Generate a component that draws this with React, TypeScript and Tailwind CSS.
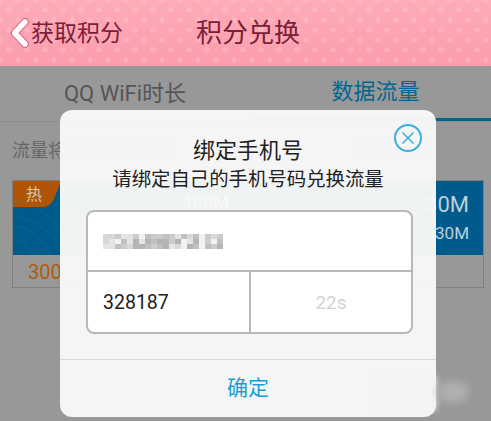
const font = "font-['Roboto','Noto_Sans_CJK_SC',sans-serif]";

// mosaic covering the phone number in the reference
const shade: Record<string, string> = {
  a: "bg-[#b4b4b4]",
  b: "bg-[#c0c0c0]",
  c: "bg-[#cccccc]",
  d: "bg-[#d8d8d8]",
  e: "bg-[#e4e4e4]",
  f: "bg-[#f2f2f2]",
};
const mosaic = ["ddceecfbccbcebdbfcdc", "defbeaeabaacafeafcfb", "eebcdaabcbaedfabfbca"];

export default function App() {
  return (
    <div className={`relative h-[421px] w-[491px] overflow-hidden bg-[#989898] ${font}`}>
      {/* header */}
      <header className="flex h-[66px] items-center bg-[radial-gradient(circle,rgba(255,255,255,0.16)_2.5px,transparent_3px),radial-gradient(circle,rgba(255,255,255,0.16)_2.5px,transparent_3px),linear-gradient(#ffabb8,#fb9dab)] bg-[length:18px_20px,18px_20px,100%_100%] bg-[position:0_0,9px_10px,0_0] pl-[10px]">
        <svg width="19" height="30" viewBox="0 0 19 30" className="shrink-0">
          <path d="M15 4 L4.5 15 L15 26" fill="none" stroke="#d9587c" strokeWidth="7.5" strokeLinecap="round" strokeLinejoin="round" />
          <path d="M15 4 L4.5 15 L15 26" fill="none" stroke="#ffffff" strokeWidth="5.5" strokeLinecap="round" strokeLinejoin="round" />
        </svg>
        <span className="ml-[2px] w-[165px] text-[23px] leading-none text-[#7a2038]">获取积分</span>
        <span className="text-[26px] leading-none text-[#7a2038]">积分兑换</span>
      </header>

      {/* tabs */}
      <div className="flex h-[56px] border-b border-[#8c8c8c]">
        <div className="flex w-[250px] items-center justify-center text-[22px] leading-none text-[#555555]">QQ WiFi时长</div>
        <div className="flex w-[241px] items-center justify-center border-b-[3px] border-[#00648f] pl-[10px] text-[22px] leading-none text-[#00688f]">数据流量</div>
      </div>

      {/* page behind the dialog */}
      <div className="px-[12px] pt-[16px]">
        <div className="flex h-[26px] items-center justify-between pr-[50px] text-[18px] leading-none text-[#666666]">
          <span>流量将兑换至手机号</span>
          <span>更改号码</span>
        </div>
        <div className="mt-[16px] h-[108px] w-[472px] border border-[#808080]">
          <div className="relative flex h-[74px] items-center justify-end overflow-hidden bg-[#005a8c] pr-[14px]">
            <svg width="48" height="74" viewBox="0 0 48 74" className="absolute left-0 top-0">
              <path d="M0 34 C16 36 30 46 48 62 M0 44 C14 46 26 54 38 74 M0 56 C8 58 14 64 20 74 M24 27 C34 34 42 42 48 50" fill="none" stroke="#06608f" strokeWidth="2" />
              <path d="M0 0 H48 L41 18 Q37 26 30 26 H0 Z" fill="#b05406" />
            </svg>
            <div className="absolute left-[13px] top-[6px] text-[16px] leading-none text-[#d8c8b8]">热</div>
            <div className="absolute left-[170px] top-[13px] text-[18px] leading-none text-white">100M</div>
            <div className="flex flex-col items-end gap-[9px] leading-none text-[#bcd0dc]">
              <span className="text-[22px]">30M</span>
              <span className="text-[17px]">30M</span>
            </div>
          </div>
          <div className="flex h-[33px] items-center pl-[15px] text-[20px] leading-none text-[#b05a10]">300</div>
        </div>
      </div>

      {/* dialog */}
      <div className="absolute left-[60px] top-[110px] flex h-[307px] w-[376px] flex-col items-center rounded-[12px] bg-[#f8f8f8]/97">
        <div className="absolute right-[14px] top-[14px] flex size-[28px] items-center justify-center rounded-full border-2 border-[#3ab0de]">
          <svg width="14" height="14" viewBox="0 0 14 14">
            <path d="M1.5 1.5 L12.5 12.5 M12.5 1.5 L1.5 12.5" stroke="#1fa7da" strokeWidth="1.2" />
          </svg>
        </div>
        <h2 className="mt-[28px] text-[22px] leading-[26px] text-[#222222]">绑定手机号</h2>
        <p className="mt-[3px] text-[19.4px] leading-[26px] text-[#222222]">请绑定自己的手机号码兑换流量</p>

        <div className="mt-[17px] ml-[26px] w-[327px] self-start overflow-hidden rounded-[8px] border-2 border-[#b8b8b8] bg-white">
          <div className="flex h-[60px] items-center border-b-2 border-[#b8b8b8] pl-[15px]">
            <div className="grid grid-cols-[repeat(20,6px)] grid-rows-[repeat(3,5px)] blur-[0.4px]">
              {mosaic.map((row, r) =>
                row.split("").map((s, i) => <span key={`${r}-${i}`} className={shade[s]} />),
              )}
            </div>
          </div>
          <div className="flex h-[61px] items-center">
            <div className="flex h-full w-[163px] items-center border-r-2 border-[#b8b8b8] pl-[15px] text-[19.5px] leading-none text-[#222222]">328187</div>
            <div className="flex flex-1 items-center justify-center text-[19px] leading-none text-[#d2d2d2]">22s</div>
          </div>
        </div>

        <div className="mt-[25px] flex h-[58px] w-full items-center justify-center border-t border-[#d8d8d8] text-[21px] leading-none text-[#1a9fd4]">确定</div>
      </div>

      {/* watermark smudge */}
      <div className="absolute left-[378px] top-[376px] h-[34px] w-[58px] bg-[#f4f4f4] blur-[3px]" />
      <div className="absolute left-[438px] top-[382px] h-[20px] w-[30px] rounded-[8px] bg-[#b0b0b0] blur-[4px]" />
    </div>
  );
}
